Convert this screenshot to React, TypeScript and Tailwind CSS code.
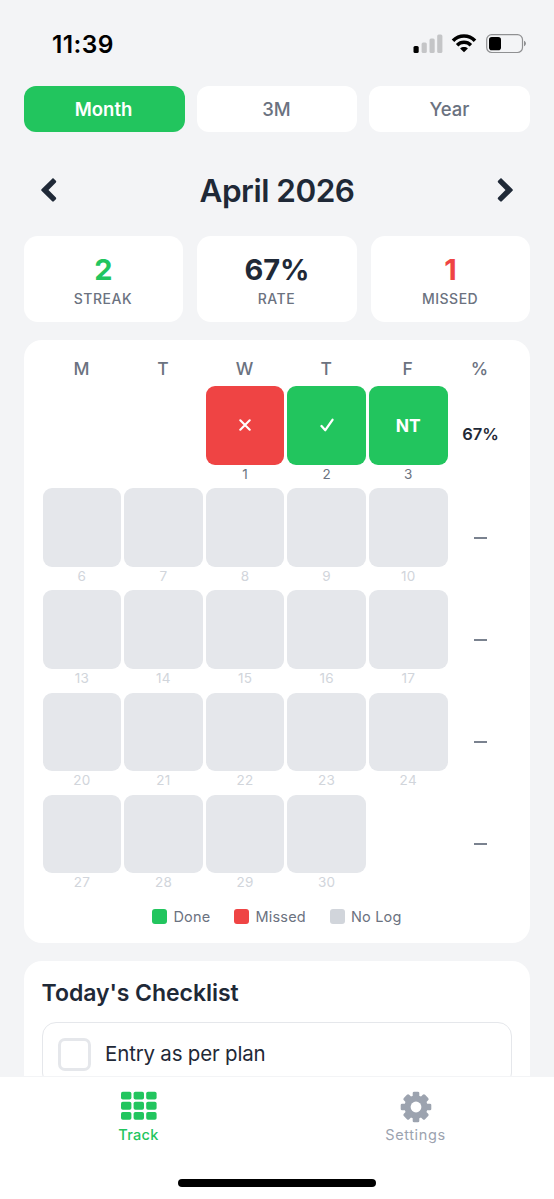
import { clsx } from "clsx";

type DayStatus = "done" | "missed" | "nt" | "none";

interface Day {
  date: number;
  status: DayStatus;
}

interface Week {
  days: (Day | null)[];
  rate: string | null;
}

const blank = (date: number): Day => ({ date, status: "none" });

const weeks: Week[] = [
  {
    days: [null, null, { date: 1, status: "missed" }, { date: 2, status: "done" }, { date: 3, status: "nt" }],
    rate: "67%",
  },
  { days: [6, 7, 8, 9, 10].map(blank), rate: null },
  { days: [13, 14, 15, 16, 17].map(blank), rate: null },
  { days: [20, 21, 22, 23, 24].map(blank), rate: null },
  { days: [...[27, 28, 29, 30].map(blank), null], rate: null },
];

const tabs = ["Month", "3M", "Year"];

const stats = [
  { label: "STREAK", value: "2", color: "text-[#22c55e]" },
  { label: "RATE", value: "67%", color: "text-[#1f2937]" },
  { label: "MISSED", value: "1", color: "text-[#ef4444]" },
];

const legend = [
  { label: "Done", color: "bg-[#22c55e]" },
  { label: "Missed", color: "bg-[#ef4444]" },
  { label: "No Log", color: "bg-[#d1d5db]" },
];

function StatusBar() {
  return (
    <div className="flex h-[86px] items-start justify-between pt-[30px] pr-[27px] pl-[52px] text-black">
      <span className="text-[24.5px] leading-7 font-semibold tracking-[0.4px]">11:39</span>
      <div className="flex items-center pt-[4px]">
        <svg width="30" height="20" viewBox="0 0 30 20">
          <rect x="0.5" y="12" width="5.2" height="7" rx="1.5" fill="#000" />
          <rect x="8.6" y="8.5" width="5.2" height="10.5" rx="1.5" fill="#c4c5c7" />
          <rect x="16.5" y="4.5" width="5.2" height="14.5" rx="1.5" fill="#c4c5c7" />
          <rect x="24.2" y="0.5" width="5.2" height="18.5" rx="1.5" fill="#c4c5c7" />
        </svg>
        <svg className="ml-[8px]" width="26" height="20" viewBox="0 0 26 20" fill="none" stroke="#000">
          <path d="M2 6.7C8.2 0.4 17.8 0.4 24 6.7" strokeWidth="3.6" />
          <path d="M6.1 11.2c3.9-3.8 9.9-3.8 13.8 0" strokeWidth="3.5" />
          <path d="M13 18.3l-3.9-3.9c2.1-1.9 5.7-1.9 7.8 0z" fill="#000" stroke="none" />
        </svg>
        <svg className="ml-[9px]" width="41" height="20" viewBox="0 0 41 20">
          <rect x="0.7" y="0.6" width="35.8" height="17.9" rx="5" fill="none" stroke="#8f9092" strokeWidth="1.2" />
          <rect x="3" y="3" width="12" height="13.2" rx="2.8" fill="#000" />
          <path d="M38 6.8c2.6 1 2.6 4.4 0 5.4z" fill="#8f9092" />
        </svg>
      </div>
    </div>
  );
}

function Chevron({ flip = false }: { flip?: boolean }) {
  return (
    <svg className={clsx(flip && "-scale-x-100")} width="16" height="24" viewBox="0 0 16 24" fill="#1f2937">
      <path d="M0.5 11.2L11.2 0.7c.5-.5 1.1-.5 1.6 0l2.1 2.1c.5.5.5 1.1 0 1.6L7.5 12l7.4 7.6c.5.5.5 1.1 0 1.6l-2.1 2.1c-.5.5-1.1.5-1.6 0L0.5 12.8c-.5-.5-.5-1.1 0-1.6z" />
    </svg>
  );
}

function DayMark({ status }: { status: DayStatus }) {
  if (status === "missed") {
    return (
      <svg width="12" height="12" viewBox="0 0 12 12" stroke="#fff" strokeWidth="2.1" strokeLinecap="round">
        <path d="M1.3 1.3l9.4 9.4M10.7 1.3l-9.4 9.4" />
      </svg>
    );
  }
  if (status === "done") {
    return (
      <svg width="14" height="14" viewBox="0 0 14 14" fill="none" stroke="#fff" strokeWidth="2.3" strokeLinecap="round" strokeLinejoin="round">
        <path d="M1.5 8l3.8 4.2 7.2-10.4" />
      </svg>
    );
  }
  if (status === "nt") {
    return <span className="pt-[1px] text-[17.5px] font-bold text-white">NT</span>;
  }
  return null;
}

function DayCell({ day }: { day: Day | null }) {
  if (!day) return <div />;
  return (
    <div className="text-center">
      <div
        className={clsx(
          "flex h-[78.6px] items-center justify-center rounded-[9px]",
          day.status === "none" && "bg-[#e5e7eb]",
          day.status === "missed" && "bg-[#ef4444]",
          (day.status === "done" || day.status === "nt") && "bg-[#22c55e]",
        )}
      >
        <DayMark status={day.status} />
      </div>
      <div
        className={clsx(
          "h-[23px] text-[13.5px] leading-[18px] tracking-[0.3px]",
          day.status === "none" ? "text-[#d1d5db]" : "text-[#6b7280]",
        )}
      >
        {day.date}
      </div>
    </div>
  );
}

function Calendar() {
  return (
    <section className="mt-[18px] h-[603px] rounded-[18px] bg-white pt-[18px] pr-[20px] pl-[19px]">
      <div className="grid h-[28px] grid-cols-[repeat(5,78.6px)_1fr] gap-x-[3px] pr-px text-center text-[17.5px] leading-[22px] font-[450] text-[#6b7280]">
        {["M", "T", "W", "T", "F", "%"].map((name, i) => (
          <span key={i} className="pr-px">
            {name}
          </span>
        ))}
      </div>
      {weeks.map((week, i) => (
        <div key={i} className="grid h-[102.2px] grid-cols-[repeat(5,78.6px)_1fr] gap-x-[3px]">
          {week.days.map((day, j) => (
            <DayCell key={j} day={day} />
          ))}
          <div className="flex h-[96px] items-center justify-center">
            {week.rate ? (
              <span className="text-[16.5px] font-semibold text-[#1f2937]">{week.rate}</span>
            ) : (
              <span className="mt-[3px] h-[2px] w-[13.5px] bg-[#7a828f]" />
            )}
          </div>
        </div>
      ))}
      <div className="mt-[10px] flex justify-center gap-[24px] pl-[1px]">
        {legend.map((item) => (
          <div key={item.label} className="flex items-center gap-[6px] text-[14.5px] leading-5 tracking-[0.2px] text-[#6b7280]">
            <span className={clsx("size-[15px] rounded-[3px]", item.color)} />
            {item.label}
          </div>
        ))}
      </div>
    </section>
  );
}

function GearIcon() {
  return (
    <svg width="32" height="32" viewBox="-16 -16 32 32" fill="#9ca3af">
      {[0, 90].map((angle) => (
        <rect key={angle} x="-3.3" y="-15.3" width="6.6" height="30.6" rx="1.4" transform={`rotate(${angle})`} />
      ))}
      {[45, 135].map((angle) => (
        <rect key={angle} x="-3.8" y="-15" width="7.6" height="30" rx="1.6" transform={`rotate(${angle})`} />
      ))}
      <circle r="11.6" />
      <circle r="5.4" fill="#fff" />
    </svg>
  );
}

function GridIcon() {
  return (
    <svg width="36" height="29" viewBox="0 0 36 29" fill="#22c55e">
      {[0.7, 10.8, 20.9].map((y) =>
        [0, 12.6, 25.2].map((x) => <rect key={`${x}-${y}`} x={x} y={y} width="10.4" height="7.9" rx="1.8" />),
      )}
    </svg>
  );
}

export default function App() {
  return (
    <div className="flex h-[1199px] w-[554px] flex-col overflow-hidden bg-[#f3f4f6] font-[Inter,sans-serif]">
      <StatusBar />

      <main className="min-h-0 flex-1 overflow-hidden px-[23.6px]">
        <div className="grid grid-cols-3 gap-[12px]">
          {tabs.map((tab, i) => (
            <button
              key={tab}
              className={clsx(
                "h-[46px] rounded-[12px] pt-[2px] pr-[1px] text-[18.5px]",
                i === 0 ? "bg-[#22c55e] font-semibold text-white" : "bg-white font-medium text-[#6b7280]",
              )}
            >
              {tab}
            </button>
          ))}
        </div>

        <div className="flex h-[104px] items-center justify-between px-[17px] pt-[11px]">
          <Chevron />
          <h1 className="pt-[3px] text-[31.5px] font-semibold tracking-[-0.5px] text-[#1f2937]">April 2026</h1>
          <Chevron flip />
        </div>

        <div className="grid grid-cols-3 gap-[14px]">
          {stats.map((stat) => (
            <div key={stat.label} className="h-[86px] rounded-[14px] bg-white pt-[16px] text-center">
              <div className={clsx("text-[29px] leading-[36px] font-bold", stat.color)}>{stat.value}</div>
              <div className="mt-[2px] pr-px text-[14px] leading-[18px] font-[450] tracking-[0.5px] text-[#6b7280]">{stat.label}</div>
            </div>
          ))}
        </div>

        <Calendar />

        <section className="mt-[18px] h-[220px] rounded-[18px] bg-white px-[18px] pt-[16px]">
          <h2 className="text-[23px] leading-8 font-semibold tracking-[-0.05px] text-[#1f2937]">Today's Checklist</h2>
          <div className="mt-[13px] flex h-[65px] items-center rounded-[14px] border-[1.5px] border-[#e5e7eb] pl-[15px]">
            <span className="size-[33px] rounded-[7px] border-3 border-[#e5e7eb]" />
            <span className="ml-[14.5px] text-[20.5px] tracking-[-0.2px] text-[#1f2937]">Entry as per plan</span>
          </div>
        </section>
      </main>

      <nav className="flex h-[123px] flex-col border-t border-gray-100 bg-white">
        <div className="grid grid-cols-2 pt-[14px] text-[14.5px] leading-5 tracking-[0.6px]">
          <div className="flex flex-col items-center text-[#22c55e]">
            <span className="h-[34px]">
              <GridIcon />
            </span>
            <span className="font-medium tracking-[0.3px]">Track</span>
          </div>
          <div className="flex flex-col items-center text-[#9ca3af]">
            <span className="h-[34px]">
              <GearIcon />
            </span>
            <span>Settings</span>
          </div>
        </div>
        <div className="mx-auto mt-[34px] h-[8px] w-[198px] rounded-full bg-black" />
      </nav>
    </div>
  );
}
